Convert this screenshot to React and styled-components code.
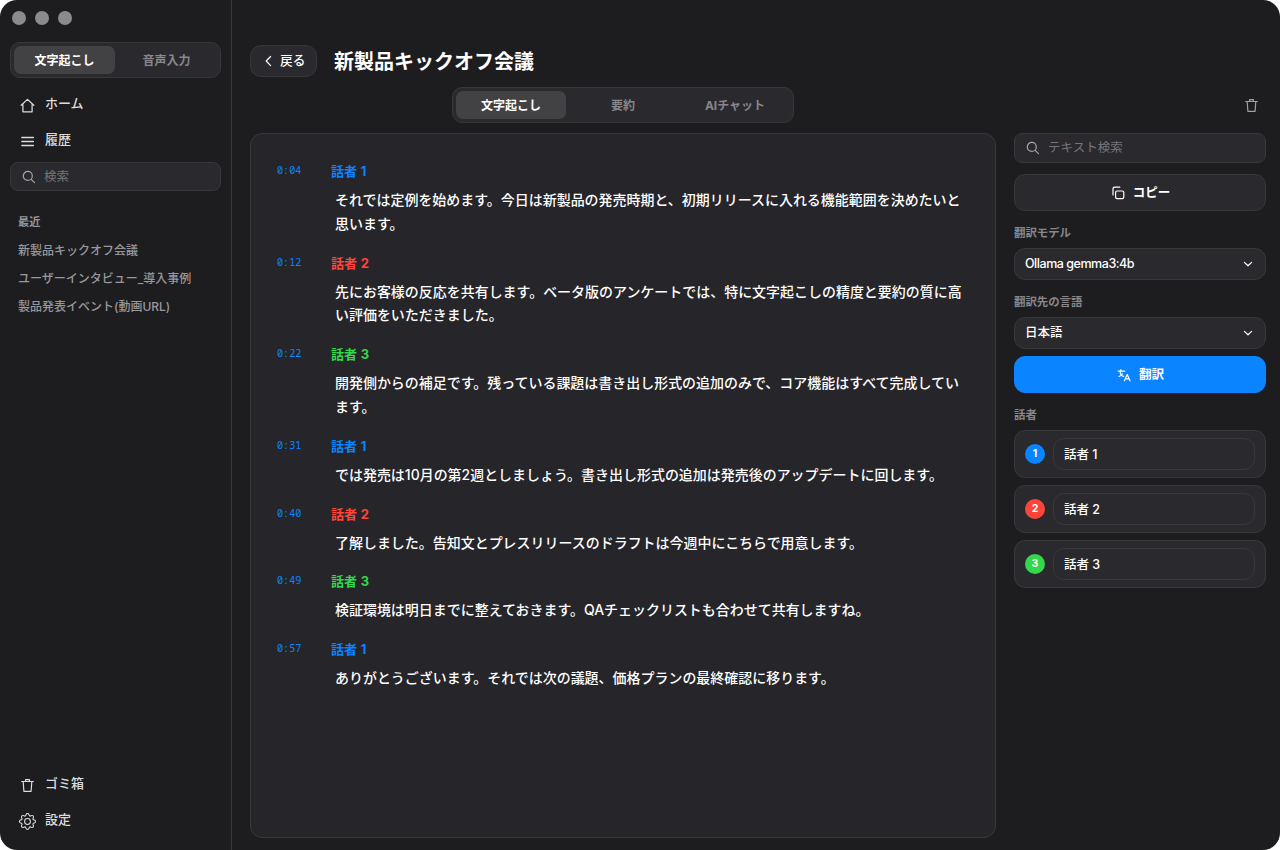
import React, { useState } from "react";
import styled, { createGlobalStyle } from "styled-components";
import { BsGear } from "react-icons/bs";

const GlobalStyle = createGlobalStyle`
  * {
    box-sizing: border-box;
  }
  body {
    margin: 0;
    background: #ffffff;
    font-family: Inter, "Noto Sans CJK JP", sans-serif;
    color: #ffffff;
  }
  button,
  input {
    font-family: inherit;
    margin: 0;
    padding: 0;
  }
`;

const Window = styled.div`
  display: flex;
  width: 1280px;
  height: 850px;
  background-color: #1d1d1f;
  border-radius: 17px;
  overflow: hidden;
`;

const Sidebar = styled.aside`
  display: flex;
  flex-direction: column;
  width: 232px;
  padding: 11px 10px 12px;
  border-right: 1px solid #38383a;
`;

const TrafficLights = styled.div`
  display: flex;
  gap: 9px;
  padding-left: 2px;
  height: 31px;
`;

const Light = styled.span`
  width: 14px;
  height: 14px;
  border-radius: 50%;
  background-color: #8b8b8b;
`;

const Segment = styled.div`
  display: flex;
  width: ${({ $width }) => $width};
  height: 36px;
  padding: 3px;
  gap: ${({ $gap }) => $gap || "0"};
  border: 1px solid #38383b;
  border-radius: 10px;
  background-color: #2a292e;
`;

const SegmentButton = styled.button`
  flex: 1;
  padding-top: 2px;
  border: none;
  border-radius: 7px;
  background-color: ${({ $active }) => ($active ? "#424244" : "transparent")};
  color: ${({ $active }) => ($active ? "#ffffff" : "#87868b")};
  font-size: 12px;
  line-height: 26px;
  font-weight: 700;
`;

const NavItem = styled.a`
  display: flex;
  align-items: center;
  gap: 9px;
  height: 36px;
  padding: 0 0 2px 9px;
  color: #dcdcdd;
  font-size: 13px;
  line-height: 20px;
  font-weight: 500;

  svg {
    flex: none;
    margin-top: 5px;
  }
`;

const NavTop = styled.nav`
  margin: 8px 0 4px;
`;

const NavBottom = styled.nav`
  margin-top: auto;
`;

const SearchBox = styled.label`
  display: flex;
  align-items: center;
  gap: 8px;
  height: ${({ $height }) => $height};
  flex: none;
  padding-left: 11px;
  border: 1px solid #39393c;
  border-radius: 8px;
  background-color: #2a292e;
  color: #a5a5a8;

  svg {
    flex: none;
  }
`;

const SearchInput = styled.input`
  flex: 1;
  min-width: 0;
  border: none;
  outline: none;
  background: transparent;
  color: #ffffff;
  font-size: 12.5px;
  line-height: 18px;

  &::placeholder {
    color: #757577;
    opacity: 1;
  }
`;

const RecentTitle = styled.h2`
  margin: 22px 0 6px 8px;
  color: #98989c;
  font-size: 11.2px;
  line-height: 18px;
  font-weight: 700;
`;

const RecentItem = styled.a`
  display: block;
  height: 28px;
  padding-left: 8px;
  color: #98989c;
  font-size: 12px;
  line-height: 28px;
  font-weight: 500;
  white-space: nowrap;
`;

const Main = styled.main`
  display: flex;
  flex-direction: column;
  flex: 1;
  min-width: 0;
  padding: 45px 14px 12px 18px;
`;

const Header = styled.header`
  display: flex;
  align-items: center;
  gap: 17px;
  height: 32px;
`;

const BackButton = styled.button`
  display: flex;
  align-items: center;
  gap: 7px;
  width: 67px;
  height: 32px;
  padding-left: 13px;
  border: 1px solid #38383b;
  border-radius: 11px;
  background-color: #2a292e;
  color: #ffffff;
  font-size: 12.7px;
  line-height: 18px;
  font-weight: 500;
`;

const Title = styled.h1`
  margin: 2px 0 0;
  font-size: 20px;
  line-height: 30px;
  font-weight: 700;
`;

const Toolbar = styled.div`
  display: grid;
  /* segment is centred over the transcript, not the whole width */
  grid-template-columns: 202px 342px 1fr;
  align-items: center;
  height: 36px;
  margin: 10px 0;
`;

const TrashButton = styled.button`
  justify-self: end;
  width: 30px;
  height: 30px;
  border: none;
  background: transparent;
  color: #a0a0a3;

  svg {
    display: block;
    margin: 0 auto;
  }
`;

const Content = styled.div`
  display: flex;
  flex: 1;
  gap: 18px;
  min-height: 0;
`;

const Transcript = styled.section`
  width: 746px;
  padding: 26.2px 26px;
  border: 1px solid #39393c;
  border-radius: 12px;
  background-color: #26252a;
`;

const Entry = styled.article`
  display: grid;
  grid-template-columns: 54px 1fr;
  margin-bottom: 16.1px;
`;

const Time = styled.time`
  color: #0a84ff;
  font-family: "Noto Sans Mono", "DejaVu Sans Mono", monospace;
  font-size: 10.2px;
  line-height: 20px;
`;

const Speaker = styled.h3`
  margin: 0;
  color: ${({ $color }) => $color};
  font-size: 13px;
  line-height: 22px;
  font-weight: 700;
  word-spacing: 0.6px;
`;

const Line = styled.p`
  grid-column: 2;
  margin: 5.9px 0 0 4px;
  font-size: 13.98px;
  line-height: 23.8px;
  font-weight: 500;
  white-space: pre;
`;

const Panel = styled.aside`
  display: flex;
  flex-direction: column;
  width: 252px;
`;

const ActionButton = styled.button`
  display: flex;
  align-items: center;
  justify-content: center;
  gap: 8px;
  flex: none;
  height: 37px;
  margin-top: ${({ $top }) => $top};
  padding-left: 1px;
  border: 1px solid ${({ $primary }) => ($primary ? "#0a84ff" : "#39393c")};
  border-radius: 11px;
  background-color: ${({ $primary }) => ($primary ? "#0a84ff" : "#2a292e")};
  color: #ffffff;
  font-size: 12.5px;
  line-height: 20px;
  font-weight: 700;
`;

const Label = styled.h2`
  margin: 14px 0 7px;
  color: #87868b;
  font-size: 11.4px;
  line-height: 16px;
  font-weight: 700;
`;

const Select = styled.button`
  display: flex;
  align-items: center;
  justify-content: space-between;
  flex: none;
  height: 32px;
  padding: 0 11px 0 10px;
  border: 1px solid #39393c;
  border-radius: 11px;
  background-color: #2a292e;
  color: #ffffff;
  font-size: 12.5px;
  line-height: 18px;
  font-weight: 500;
  letter-spacing: ${({ $tight }) => ($tight ? "-0.46px" : "normal")};
`;

const SpeakerList = styled.div`
  display: flex;
  flex-direction: column;
  gap: 7px;
`;

const SpeakerCard = styled.div`
  display: flex;
  align-items: center;
  gap: 8px;
  height: 48px;
  padding: 0 10px;
  border: 1px solid #39393c;
  border-radius: 11px;
  background-color: #2a292e;
`;

const Badge = styled.span`
  width: 20px;
  height: 20px;
  border-radius: 50%;
  background-color: ${({ $color }) => $color};
  font-size: 10.5px;
  line-height: 20px;
  font-weight: 700;
  text-align: center;
`;

const NameInput = styled.input`
  width: 202px;
  height: 32px;
  padding: 0 10px 1px;
  border: 1px solid #38383b;
  border-radius: 11px;
  outline: none;
  background: transparent;
  color: #ffffff;
  font-size: 12.5px;
  font-weight: 500;
`;

const HomeIcon = () => (
  <svg width="17" height="17" viewBox="0 0 17 17" fill="none" stroke="currentColor" strokeWidth="1.25" strokeLinejoin="round" strokeLinecap="round">
    <path d="M2.2 8.3 8.5 2.4l6.3 5.9M3.9 7.2v7.6h9.2V7.2" />
  </svg>
);

const MenuIcon = () => (
  <svg width="17" height="17" viewBox="0 0 17 17" fill="none" stroke="currentColor" strokeWidth="1.3" strokeLinecap="round">
    <path d="M2.8 4.5h11.6M2.8 8.5h11.6M2.8 12.5h11.6" />
  </svg>
);

const SearchIcon = () => (
  <svg width="14" height="14" viewBox="0 0 14 14" fill="none" stroke="currentColor" strokeWidth="1.2" strokeLinecap="round">
    <circle cx="5.8" cy="5.9" r="4.5" />
    <path d="m9.2 9.3 3.3 3.3" />
  </svg>
);

const TrashIcon = () => (
  <svg width="17" height="17" viewBox="0 0 17 17" fill="none" stroke="currentColor" strokeWidth="1.2" strokeLinejoin="round" strokeLinecap="round">
    <path d="M2.6 4.5h11.8M6.6 4.3V2.7h3.8v1.6M4.2 4.7l.7 9.6h7.2l.7-9.6" />
  </svg>
);

const CopyIcon = () => (
  <svg width="14" height="14" viewBox="0 0 14 14" fill="none" stroke="currentColor" strokeWidth="1.2" strokeLinejoin="round" strokeLinecap="round">
    <rect x="4.6" y="5" width="8.2" height="7.7" rx="1.4" />
    <path d="M2 8.9V2.9Q2 1.2 3.6 1.2h5.2" />
  </svg>
);

const TranslateIcon = () => (
  <svg width="14" height="14" viewBox="0 0 14 14" fill="none" stroke="currentColor" strokeWidth="1.2" strokeLinejoin="round" strokeLinecap="round">
    <path d="M1.3 3.2h6.4M3.9 1.5v1.7M3.2 3.4C3.2 6 4.6 7.9 6.6 8.3M5.3 5.9C4.6 7.2 3.5 8 2 8.5" />
    <path d="m7.4 12.8 2.8-6.4 2.8 6.4M8.4 10.8H12" />
  </svg>
);

const ChevronDown = () => (
  <svg width="12" height="12" viewBox="0 0 12 12" fill="none" stroke="currentColor" strokeWidth="1.2" strokeLinejoin="round" strokeLinecap="round">
    <path d="M2.4 4.4 6 7.8l3.6-3.4" />
  </svg>
);

const ChevronLeft = () => (
  <svg width="9" height="14" viewBox="0 0 9 14" fill="none" stroke="currentColor" strokeWidth="1.2" strokeLinejoin="round" strokeLinecap="round">
    <path d="M6.6 2.5 2.2 7l4.4 4.6" />
  </svg>
);

const speakers = [
  { id: 1, name: "話者 1", color: "#0a84ff" },
  { id: 2, name: "話者 2", color: "#ff453a" },
  { id: 3, name: "話者 3", color: "#32d74b" },
];

const entries = [
  { time: "0:04", speaker: 0, text: "それでは定例を始めます。今日は新製品の発売時期と、初期リリースに入れる機能範囲を決めたいと\n思います。" },
  { time: "0:12", speaker: 1, text: "先にお客様の反応を共有します。ベータ版のアンケートでは、特に文字起こしの精度と要約の質に高\nい評価をいただきました。" },
  { time: "0:22", speaker: 2, text: "開発側からの補足です。残っている課題は書き出し形式の追加のみで、コア機能はすべて完成してい\nます。" },
  { time: "0:31", speaker: 0, text: "では発売は10月の第2週としましょう。書き出し形式の追加は発売後のアップデートに回します。" },
  { time: "0:40", speaker: 1, text: "了解しました。告知文とプレスリリースのドラフトは今週中にこちらで用意します。" },
  { time: "0:49", speaker: 2, text: "検証環境は明日までに整えておきます。QAチェックリストも合わせて共有しますね。" },
  { time: "0:57", speaker: 0, text: "ありがとうございます。それでは次の議題、価格プランの最終確認に移ります。" },
];

const recents = [
  "新製品キックオフ会議",
  "ユーザーインタビュー_導入事例",
  "製品発表イベント(動画URL)",
];

const modes = ["文字起こし", "音声入力"];
const tabs = ["文字起こし", "要約", "AIチャット"];

const App = () => {
  const [mode, setMode] = useState(0);
  const [tab, setTab] = useState(0);

  return (
    <>
      <GlobalStyle />
      <Window>
        <Sidebar>
          <TrafficLights>
            <Light />
            <Light />
            <Light />
          </TrafficLights>
          <Segment $width="211px" $gap="1px">
            {modes.map((label, i) => (
              <SegmentButton key={label} $active={mode === i} onClick={() => setMode(i)}>
                {label}
              </SegmentButton>
            ))}
          </Segment>
          <NavTop>
            <NavItem>
              <HomeIcon />
              ホーム
            </NavItem>
            <NavItem>
              <MenuIcon />
              履歴
            </NavItem>
          </NavTop>
          <SearchBox $height="29px">
            <SearchIcon />
            <SearchInput placeholder="検索" />
          </SearchBox>
          <RecentTitle>最近</RecentTitle>
          {recents.map((name) => (
            <RecentItem key={name}>{name}</RecentItem>
          ))}
          <NavBottom>
            <NavItem>
              <TrashIcon />
              ゴミ箱
            </NavItem>
            <NavItem>
              <BsGear size={17} />
              設定
            </NavItem>
          </NavBottom>
        </Sidebar>
        <Main>
          <Header>
            <BackButton>
              <ChevronLeft />
              戻る
            </BackButton>
            <Title>新製品キックオフ会議</Title>
          </Header>
          <Toolbar>
            <span />
            <Segment $width="342px" $gap="2px">
              {tabs.map((label, i) => (
                <SegmentButton key={label} $active={tab === i} onClick={() => setTab(i)}>
                  {label}
                </SegmentButton>
              ))}
            </Segment>
            <TrashButton>
              <TrashIcon />
            </TrashButton>
          </Toolbar>
          <Content>
            <Transcript>
              {entries.map(({ time, speaker, text }) => (
                <Entry key={time}>
                  <Time>{time}</Time>
                  <Speaker $color={speakers[speaker].color}>{speakers[speaker].name}</Speaker>
                  <Line>{text}</Line>
                </Entry>
              ))}
            </Transcript>
            <Panel>
              <SearchBox $height="30px">
                <SearchIcon />
                <SearchInput placeholder="テキスト検索" />
              </SearchBox>
              <ActionButton $top="11px">
                <CopyIcon />
                コピー
              </ActionButton>
              <Label>翻訳モデル</Label>
              <Select $tight>
                Ollama gemma3:4b
                <ChevronDown />
              </Select>
              <Label>翻訳先の言語</Label>
              <Select>
                日本語
                <ChevronDown />
              </Select>
              <ActionButton $primary $top="7px">
                <TranslateIcon />
                翻訳
              </ActionButton>
              <Label>話者</Label>
              <SpeakerList>
                {speakers.map(({ id, name, color }) => (
                  <SpeakerCard key={id}>
                    <Badge $color={color}>{id}</Badge>
                    <NameInput defaultValue={name} />
                  </SpeakerCard>
                ))}
              </SpeakerList>
            </Panel>
          </Content>
        </Main>
      </Window>
    </>
  );
};

export default App;
